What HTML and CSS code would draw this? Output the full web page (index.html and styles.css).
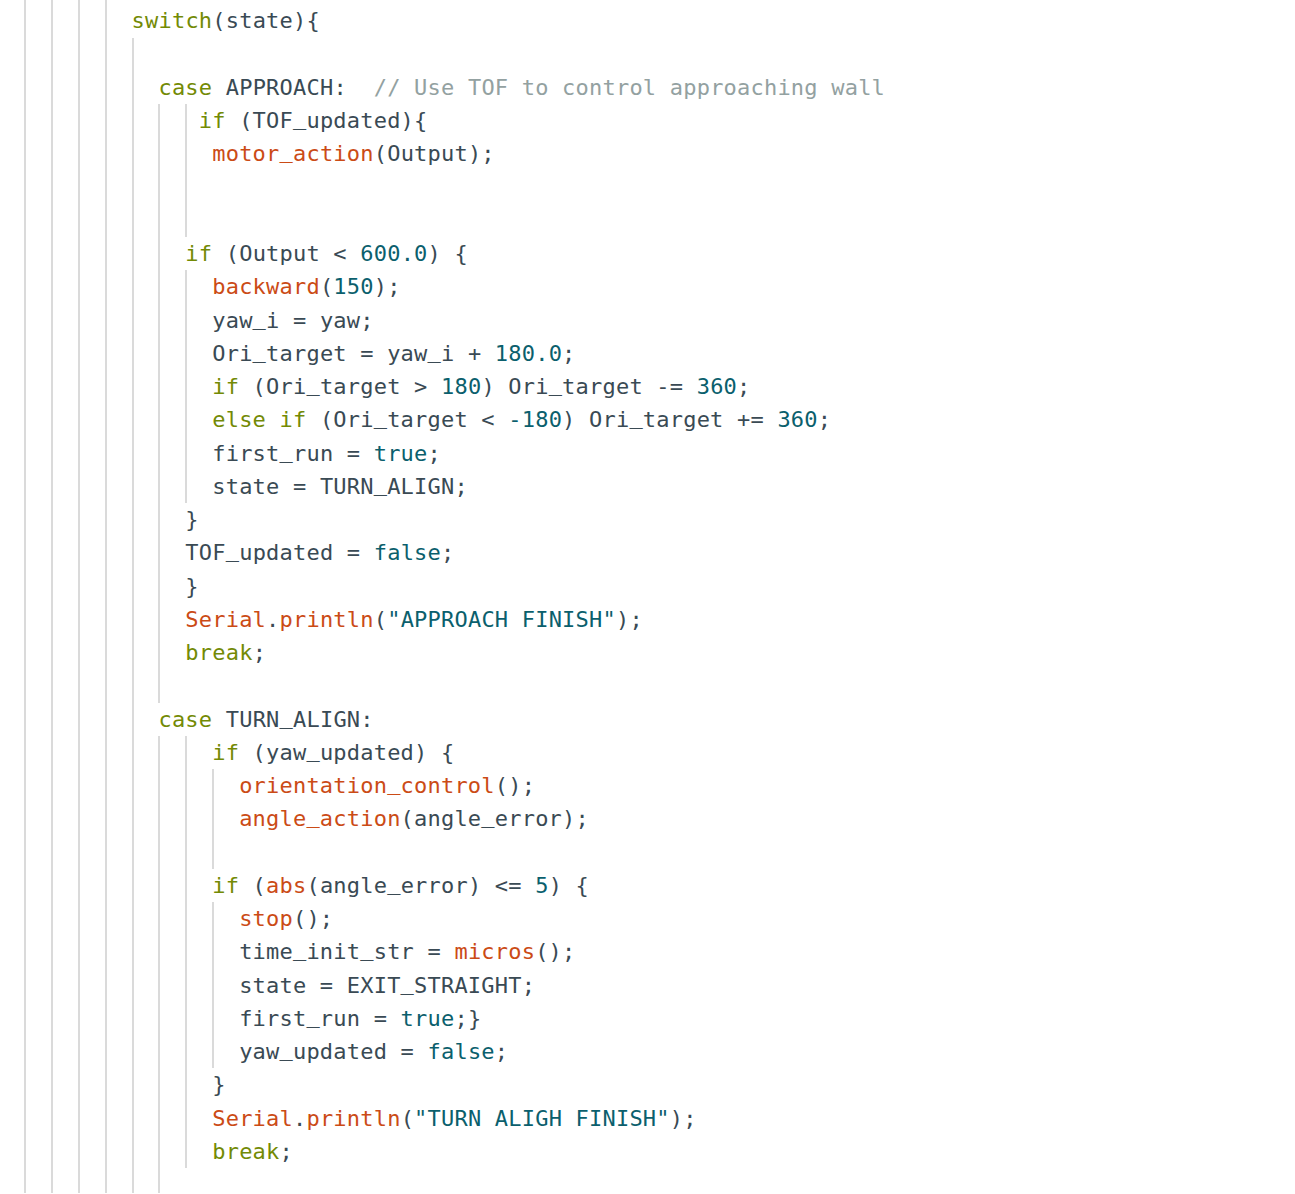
FILE: index.html
```html
<!DOCTYPE html>
<html lang="en">
<head>
<meta charset="utf-8">
<title>state machine</title>
<link rel="stylesheet" href="styles.css">
</head>
<body>
<div class="code">
  <div class="g">
    <div class="g">
      <div class="g">
        <div class="g top">
          <div class="ln"><span class="k">switch</span>(state){</div>
          <div class="g">
            <div class="ln"> </div>
            <div class="ln"><span class="k">case</span> APPROACH:  <span class="c">// Use TOF to control approaching wall</span></div>
            <div class="g">
              <div class="g half">
                <div class="ln"><span class="k">if</span> (TOF<span class="u">_</span>updated){</div>
                <div class="ln"> <span class="f">motor<span class="u">_</span>action</span>(Output);</div>
                <div class="ln"> </div>
                <div class="ln"> </div>
              </div>
              <div class="ln"><span class="k">if</span> (Output &lt; <span class="n">600.0</span>) {</div>
              <div class="g">
                <div class="ln"><span class="f">backward</span>(<span class="n">150</span>);</div>
                <div class="ln">yaw<span class="u">_</span>i = yaw;</div>
                <div class="ln">Ori<span class="u">_</span>target = yaw<span class="u">_</span>i + <span class="n">180.0</span>;</div>
                <div class="ln"><span class="k">if</span> (Ori<span class="u">_</span>target &gt; <span class="n">180</span>) Ori<span class="u">_</span>target -= <span class="n">360</span>;</div>
                <div class="ln"><span class="k">else if</span> (Ori<span class="u">_</span>target &lt; <span class="n">-180</span>) Ori<span class="u">_</span>target += <span class="n">360</span>;</div>
                <div class="ln">first<span class="u">_</span>run = <span class="n">true</span>;</div>
                <div class="ln">state = TURN<span class="u">_</span>ALIGN;</div>
              </div>
              <div class="ln">}</div>
              <div class="ln">TOF<span class="u">_</span>updated = <span class="n">false</span>;</div>
              <div class="ln">}</div>
              <div class="ln"><span class="f">Serial</span>.<span class="f">println</span>(<span class="n">"APPROACH FINISH"</span>);</div>
              <div class="ln"><span class="k">break</span>;</div>
              <div class="ln"> </div>
            </div>
            <div class="ln"><span class="k">case</span> TURN<span class="u">_</span>ALIGN:</div>
            <div class="g tail">
              <div class="g">
                <div class="ln"><span class="k">if</span> (yaw<span class="u">_</span>updated) {</div>
                <div class="g">
                  <div class="ln"><span class="f">orientation<span class="u">_</span>control</span>();</div>
                  <div class="ln"><span class="f">angle<span class="u">_</span>action</span>(angle<span class="u">_</span>error);</div>
                  <div class="ln"> </div>
                </div>
                <div class="ln"><span class="k">if</span> (<span class="f">abs</span>(angle<span class="u">_</span>error) &lt;= <span class="n">5</span>) {</div>
                <div class="g">
                  <div class="ln"><span class="f">stop</span>();</div>
                  <div class="ln">time<span class="u">_</span>init<span class="u">_</span>str = <span class="f">micros</span>();</div>
                  <div class="ln">state = EXIT<span class="u">_</span>STRAIGHT;</div>
                  <div class="ln">first<span class="u">_</span>run = <span class="n">true</span>;}</div>
                  <div class="ln">yaw<span class="u">_</span>updated = <span class="n">false</span>;</div>
                </div>
                <div class="ln">}</div>
                <div class="ln"><span class="f">Serial</span>.<span class="f">println</span>(<span class="n">"TURN ALIGH FINISH"</span>);</div>
                <div class="ln"><span class="k">break</span>;</div>
              </div>
            </div>
          </div>
        </div>
      </div>
    </div>
  </div>
</div>
</body>
</html>
```

FILE: styles.css
```css
html, body {
  margin: 0;
  padding: 0;
  background: #ffffff;
}

.code {
  padding-left: 24px;
  font-family: "DejaVu Sans Mono", "Liberation Mono", monospace;
  font-size: 22px;
  letter-spacing: 0.21px;
  line-height: 33.26px;
  color: #3a4a54;
}

.g {
  border-left: 2px solid #dadada;
  padding-left: 24.9px;
}

.g.half {
  padding-left: 11.45px;
}

.top {
  padding-top: 4.4px;
}

.tail {
  padding-bottom: 25px;
}

.ln {
  white-space: pre;
  height: 33.26px;
}

.u {
  font-family: "Liberation Mono", monospace;
  letter-spacing: 0.25px;
}

.k { color: #738a05; }
.f { color: #cb4b16; }
.n { color: #0b5f6d; }
.c { color: #93a1a1; }
```
